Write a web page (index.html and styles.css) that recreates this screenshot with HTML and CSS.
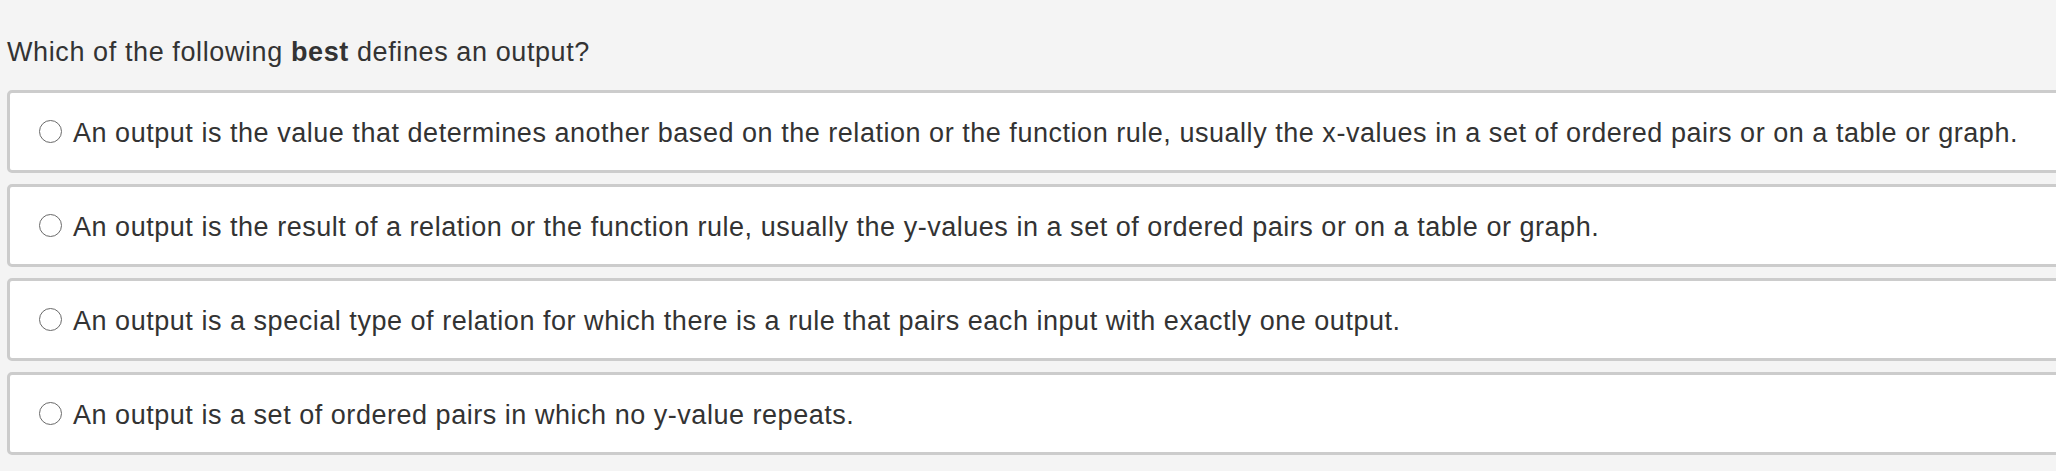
FILE: index.html
```html
<!DOCTYPE html>
<html lang="en">
<head>
<meta charset="utf-8">
<title>Question</title>
<link rel="stylesheet" href="styles.css">
</head>
<body>
<div class="page">
  <p class="question">Which of the following <b>best</b> defines an output?</p>
  <div class="options">
    <label class="option"><span class="radio"></span><span class="text">An output is the value that determines another based on the relation or the function rule, usually the x-values in a set of ordered pairs or on a table or graph.</span></label>
    <label class="option"><span class="radio"></span><span class="text">An output is the result of a relation or the function rule, usually the y-values in a set of ordered pairs or on a table or graph.</span></label>
    <label class="option"><span class="radio"></span><span class="text">An output is a special type of relation for which there is a rule that pairs each input with exactly one output.</span></label>
    <label class="option"><span class="radio"></span><span class="text">An output is a set of ordered pairs in which no y-value repeats.</span></label>
  </div>
</div>
</body>
</html>
```

FILE: styles.css
```css
html, body {
  margin: 0;
  padding: 0;
  background: #f4f4f4;
  overflow: hidden;
}
body {
  font-family: "Liberation Sans", Arial, sans-serif;
  color: #333333;
}
.page {
  padding: 30px 0 0 7px;
  width: 2080px;
}
.question {
  margin: 0;
  font-size: 27px;
  letter-spacing: 0.6px;
  line-height: 44px;
}
.question b {
  font-weight: bold;
}
.options {
  margin-top: 16px;
  display: flex;
  flex-direction: column;
  gap: 11px;
}
.option {
  display: flex;
  align-items: center;
  height: 77px;
  background: #ffffff;
  border: 3px solid #cccccc;
  border-radius: 5px;
  padding-left: 29px;
  box-sizing: content-box;
}
.radio {
  width: 21px;
  height: 21px;
  border: 1.5px solid #6a6a6a;
  border-radius: 50%;
  background: #ffffff;
  flex: none;
  margin-right: 11px;
}
.text {
  font-size: 27px;
  letter-spacing: 0.53px;
  line-height: 30px;
  padding-top: 2px;
  white-space: nowrap;
}
```
